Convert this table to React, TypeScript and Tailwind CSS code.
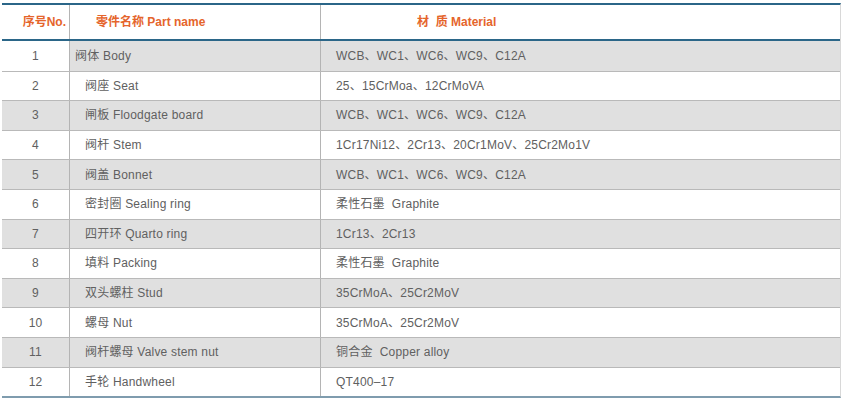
import React from 'react';

type Part = { no: number; name: string; material: string };

const parts: Part[] = [
  { no: 1, name: '阀体 Body', material: 'WCB、WC1、WC6、WC9、C12A' },
  { no: 2, name: '阀座 Seat', material: '25、15CrMoa、12CrMoVA' },
  { no: 3, name: '闸板 Floodgate board', material: 'WCB、WC1、WC6、WC9、C12A' },
  { no: 4, name: '阀杆 Stem', material: '1Cr17Ni12、2Cr13、20Cr1MoV、25Cr2Mo1V' },
  { no: 5, name: '阀盖 Bonnet', material: 'WCB、WC1、WC6、WC9、C12A' },
  { no: 6, name: '密封圈 Sealing ring', material: '柔性石墨  Graphite' },
  { no: 7, name: '四开环 Quarto ring', material: '1Cr13、2Cr13' },
  { no: 8, name: '填料 Packing', material: '柔性石墨  Graphite' },
  { no: 9, name: '双头螺柱 Stud', material: '35CrMoA、25Cr2MoV' },
  { no: 10, name: '螺母 Nut', material: '35CrMoA、25Cr2MoV' },
  { no: 11, name: '阀杆螺母 Valve stem nut', material: '铜合金  Copper alloy' },
  { no: 12, name: '手轮 Handwheel', material: 'QT400–17' },
];

const font = { fontFamily: '"Liberation Sans", "Noto Sans CJK SC", sans-serif' };

const App: React.FC = () => {
  return (
    <div className="w-[843px] h-[400px] bg-white overflow-hidden" style={font}>
      <div className="ml-[2px] mt-[3px] w-[839px] border-t-2 border-b-2 border-t-[#2b6688] border-b-[#7f9cae] border-r border-r-[#d8d8d8]">
        {/* Header */}
        <div className="grid grid-cols-[68px_251px_1fr] h-[36px] border-b-2 border-[#2b6688] text-[12px] font-bold text-[#e5652c]">
          <div className="flex items-center justify-end pr-[3px] border-r border-[#b4b4b4]">序号No.</div>
          <div className="flex items-center pl-[26px] border-r border-[#b4b4b4]">零件名称 Part name</div>
          <div className="flex items-center pl-[96px]">材&nbsp;&nbsp;质 Material</div>
        </div>

        {/* Rows */}
        {parts.map((p, i) => {
          const gray = i % 2 === 0;
          return (
            <div
              key={p.no}
              className={`grid grid-cols-[68px_251px_1fr] h-[29.6px] text-[12px] text-[#606060] tracking-[0.2px] ${i > 0 ? 'border-t border-[#b9b9b9]' : ''}`}
            >
              <div className={`flex items-center justify-center border-r border-[#b4b4b4] ${gray && i > 0 ? 'bg-[#e0e0e0]' : 'bg-white'}`}>
                {p.no}
              </div>
              <div className={`flex items-center border-r border-[#b4b4b4] ${i === 0 ? 'pl-[5px]' : 'pl-[15px]'} ${gray ? 'bg-[#e0e0e0]' : 'bg-white'}`}>
                {p.name}
              </div>
              <div className={`flex items-center pl-[15px] whitespace-pre ${gray ? 'bg-[#e0e0e0]' : 'bg-white'}`}>
                {p.material}
              </div>
            </div>
          );
        })}
      </div>
    </div>
  );
};

export default App;
